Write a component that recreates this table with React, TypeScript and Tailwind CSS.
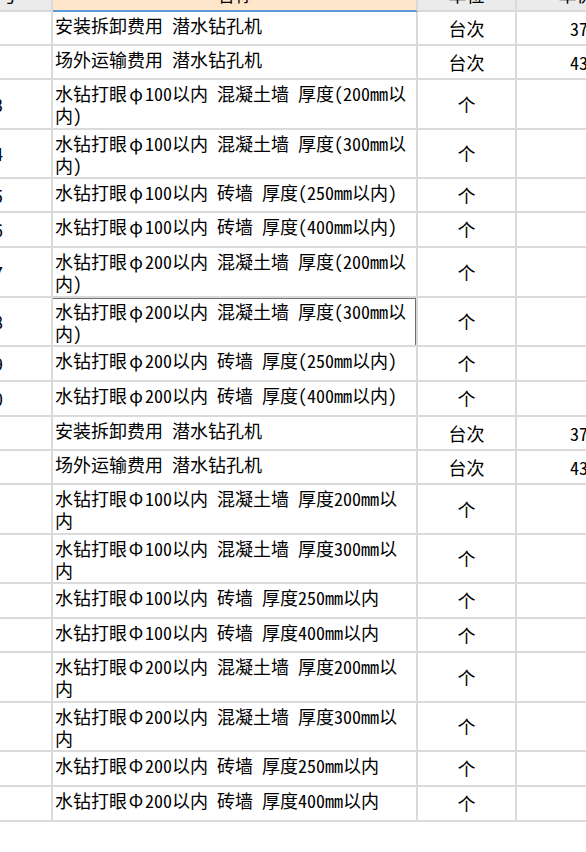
import React from 'react'

interface QuotaRow {
  no: string
  name: string[]
  unit: string
  price: string
  h: string
  selected?: boolean
}

const ROWS: QuotaRow[] = [
  { no: '', name: ['安装拆卸费用 潜水钻孔机'], unit: '台次', price: '3750.00', h: 'h-[34px]' },
  { no: '', name: ['场外运输费用 潜水钻孔机'], unit: '台次', price: '4300.00', h: 'h-[34px]' },
  { no: '3', name: ['水钻打眼φ100以内 混凝土墙 厚度(200mm以', '内)'], unit: '个', price: '', h: 'h-[50px]' },
  { no: '4', name: ['水钻打眼φ100以内 混凝土墙 厚度(300mm以', '内)'], unit: '个', price: '', h: 'h-[49px]' },
  { no: '5', name: ['水钻打眼φ100以内 砖墙 厚度(250mm以内)'], unit: '个', price: '', h: 'h-[34px]' },
  { no: '6', name: ['水钻打眼φ100以内 砖墙 厚度(400mm以内)'], unit: '个', price: '', h: 'h-[35px]' },
  { no: '7', name: ['水钻打眼φ200以内 混凝土墙 厚度(200mm以', '内)'], unit: '个', price: '', h: 'h-[50px]' },
  { no: '8', name: ['水钻打眼φ200以内 混凝土墙 厚度(300mm以', '内)'], unit: '个', price: '', h: 'h-[49px]', selected: true },
  { no: '9', name: ['水钻打眼φ200以内 砖墙 厚度(250mm以内)'], unit: '个', price: '', h: 'h-[35px]' },
  { no: '0', name: ['水钻打眼φ200以内 砖墙 厚度(400mm以内)'], unit: '个', price: '', h: 'h-[35px]' },
  { no: '', name: ['安装拆卸费用 潜水钻孔机'], unit: '台次', price: '3750.00', h: 'h-[34px]' },
  { no: '', name: ['场外运输费用 潜水钻孔机'], unit: '台次', price: '4300.00', h: 'h-[34px]' },
  { no: '', name: ['水钻打眼Φ100以内 混凝土墙 厚度200mm以', '内'], unit: '个', price: '', h: 'h-[50px]' },
  { no: '', name: ['水钻打眼Φ100以内 混凝土墙 厚度300mm以', '内'], unit: '个', price: '', h: 'h-[49px]' },
  { no: '', name: ['水钻打眼Φ100以内 砖墙 厚度250mm以内'], unit: '个', price: '', h: 'h-[35px]' },
  { no: '', name: ['水钻打眼Φ100以内 砖墙 厚度400mm以内'], unit: '个', price: '', h: 'h-[34px]' },
  { no: '', name: ['水钻打眼Φ200以内 混凝土墙 厚度200mm以', '内'], unit: '个', price: '', h: 'h-[50px]' },
  { no: '', name: ['水钻打眼Φ200以内 混凝土墙 厚度300mm以', '内'], unit: '个', price: '', h: 'h-[49px]' },
  { no: '', name: ['水钻打眼Φ200以内 砖墙 厚度250mm以内'], unit: '个', price: '', h: 'h-[35px]' },
  { no: '', name: ['水钻打眼Φ200以内 砖墙 厚度400mm以内'], unit: '个', price: '', h: 'h-[35px]' },
]

const GRID = 'grid grid-cols-[53px_365px_99px_121px]'
const CELL = 'border-r-2 border-b-2 border-[#dadada] overflow-hidden'

// φ / Φ 在原表里是全角宽度
function NameLine({ text }: { text: string }) {
  const parts = text.split(/([φΦ])/)
  return (
    <div className="whitespace-pre">
      {parts.map((p, i) =>
        p === 'φ' || p === 'Φ'
          ? <span key={i} className="inline-block w-[18px] text-center">{p}</span>
          : <React.Fragment key={i}>{p}</React.Fragment>
      )}
    </div>
  )
}

function HeaderRow() {
  return (
    <div className={`${GRID} h-[34px] -mt-[22px]`}>
      {/* 序号列 左边被裁掉 */}
      <div className={`${CELL} bg-[#ebebeb] flex items-center justify-end pr-[34px]`}>
        <span className="whitespace-nowrap">序号</span>
      </div>
      <div className="border-r-2 border-b-2 border-r-[#dadada] border-b-[#5b9bd5] bg-[#fde6c9] flex items-center justify-center">
        名称
      </div>
      <div className={`${CELL} bg-[#ebebeb] flex items-center justify-center`}>单位</div>
      <div className={`${CELL} bg-[#ebebeb] flex items-center justify-center`}>单价</div>
    </div>
  )
}

function DataRow({ row }: { row: QuotaRow }) {
  return (
    <div className={`${GRID} ${row.h}`}>
      <div className={`${CELL} flex items-center justify-end pr-[48px]`}>
        <span className="whitespace-nowrap">{row.no}</span>
      </div>
      <div className={`${CELL} relative pl-[2px] pt-[2px] leading-[22px]`}>
        {row.name.map((line, i) => (
          <NameLine key={i} text={line} />
        ))}
        {row.selected && (
          <div className="pointer-events-none absolute -left-[2px] -top-[1px] -right-[1px] -bottom-[2px] border-2 border-[#707070]" />
        )}
      </div>
      <div className={`${CELL} flex items-center justify-center`}>{row.unit}</div>
      <div className={`${CELL} flex items-center justify-end pr-[3px]`}>{row.price}</div>
    </div>
  )
}

export default function App() {
  return (
    <div
      className="w-[586px] h-[852px] overflow-hidden bg-white text-black text-[18px] leading-[21px]"
      style={{ fontFamily: '"Noto Sans Mono CJK SC", "Noto Sans CJK SC", sans-serif' }}
    >
      <HeaderRow />
      {ROWS.map((row, i) => (
        <DataRow key={i} row={row} />
      ))}
    </div>
  )
}
